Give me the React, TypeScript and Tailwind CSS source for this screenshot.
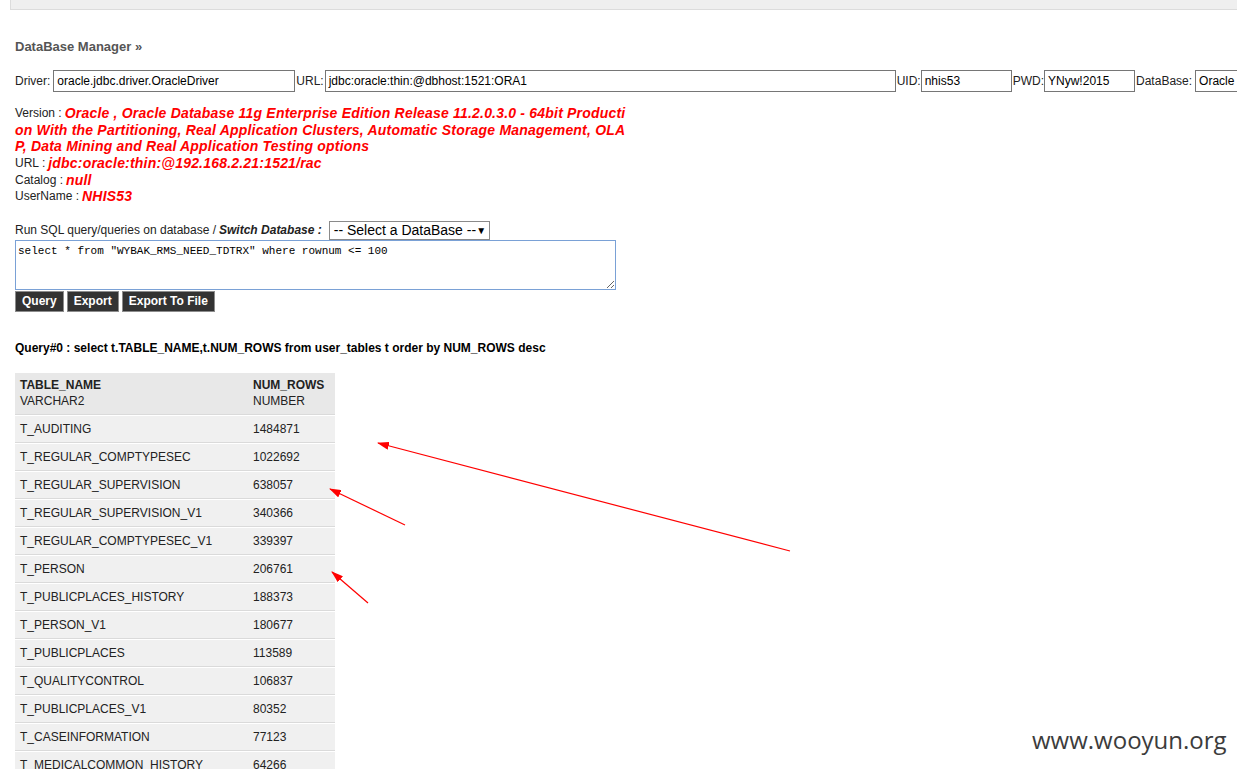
import React from "react";

const rows: [string, string][] = [
  ["T_AUDITING", "1484871"],
  ["T_REGULAR_COMPTYPESEC", "1022692"],
  ["T_REGULAR_SUPERVISION", "638057"],
  ["T_REGULAR_SUPERVISION_V1", "340366"],
  ["T_REGULAR_COMPTYPESEC_V1", "339397"],
  ["T_PERSON", "206761"],
  ["T_PUBLICPLACES_HISTORY", "188373"],
  ["T_PERSON_V1", "180677"],
  ["T_PUBLICPLACES", "113589"],
  ["T_QUALITYCONTROL", "106837"],
  ["T_PUBLICPLACES_V1", "80352"],
  ["T_CASEINFORMATION", "77123"],
  ["T_MEDICALCOMMON_HISTORY", "64266"],
  ["T_MEDICALCOMMON", "60112"],
];

function Field({ value, width }: { value: string; width: string }) {
  return (
    <div className={`${width} h-[22px] shrink-0 border border-[#767676] bg-white pl-[3px] flex items-center text-[12px] text-black whitespace-nowrap overflow-hidden`}>
      {value}
    </div>
  );
}

function Info({ label, children }: { label?: string; children: React.ReactNode }) {
  return (
    <div className="h-[16.6px] flex items-center whitespace-nowrap">
      {label && <span className="mr-[3px]">{label}</span>}
      <span className="text-[14px] leading-[16px] font-bold italic text-[#ff0000] tracking-[0.2px]">{children}</span>
    </div>
  );
}

export default function App() {
  return (
    <div
      className="relative w-[1237px] h-[769px] overflow-hidden bg-white text-[12px] text-[#222]"
      style={{ fontFamily: "'Liberation Sans', Arial, sans-serif" }}
    >
      <div className="ml-[10px] h-[10px] bg-[#efefef] border-l border-b border-[#dcdcdc]" />

      <div className="pl-[15px]">
        <h2 className="mt-[29px] text-[13px] leading-[16px] font-bold text-[#555]">DataBase Manager »</h2>

        <div className="mt-[15px] flex items-center whitespace-nowrap">
          <span>Driver:</span>
          <div className="ml-[3px]"><Field value="oracle.jdbc.driver.OracleDriver" width="w-[242px]" /></div>
          <span className="ml-[1px]">URL:</span>
          <div className="ml-[1px]"><Field value="jdbc:oracle:thin:@dbhost:1521:ORA1" width="w-[571px]" /></div>
          <span className="ml-[1px]">UID:</span>
          <div><Field value="nhis53" width="w-[91px]" /></div>
          <span className="ml-[1px]">PWD:</span>
          <div><Field value="YNyw!2015" width="w-[91px]" /></div>
          <span className="ml-[1px]">DataBase:</span>
          <div className="ml-[3px]"><Field value=" Oracle" width="w-[120px]" /></div>
        </div>

        <div className="mt-[13px] text-[12px]">
          <Info label="Version :">Oracle , Oracle Database 11g Enterprise Edition Release 11.2.0.3.0 - 64bit Producti</Info>
          <Info>on With the Partitioning, Real Application Clusters, Automatic Storage Management, OLA</Info>
          <Info>P, Data Mining and Real Application Testing options</Info>
          <Info label="URL :">jdbc:oracle:thin:@192.168.2.21:1521/rac</Info>
          <Info label="Catalog :">null</Info>
          <Info label="UserName :">NHIS53</Info>
        </div>

        <div className="mt-[16px] h-[19px] flex items-center whitespace-nowrap">
          <span>Run SQL query/queries on database /</span>
          <span className="ml-[3px] font-bold italic">Switch Database :</span>
          <div className="ml-[7px] h-[19px] w-[161px] border border-[#8a8a8a] bg-white flex items-center justify-between pl-[4px] pr-[7px] text-[14px] text-black">
            <span>-- Select a DataBase --</span>
            <span className="text-[10px]">▼</span>
          </div>
        </div>

        <textarea
          readOnly
          defaultValue={'select * from "WYBAK_RMS_NEED_TDTRX" where rownum <= 100'}
          className="block w-[601px] h-[50px] border border-[#7aa1d6] bg-white px-[2px] py-[3px] text-[11px] leading-[14px] text-black outline-none resize-y"
          style={{ fontFamily: "'Liberation Mono', 'Courier New', monospace" }}
        />

        <div className="flex gap-[3px] mt-[1px]">
          {["Query", "Export", "Export To File"].map((b) => (
            <div
              key={b}
              className="h-[21px] px-[6px] flex items-center bg-[#333] border border-[#8c8c8c] text-white font-bold text-[12px]"
            >
              {b}
            </div>
          ))}
        </div>

        <div className="mt-[28px] leading-[16px] font-bold text-black">
          Query#0 : select t.TABLE_NAME,t.NUM_ROWS from user_tables t order by NUM_ROWS desc
        </div>

        <div className="mt-[17px] w-[320px]">
          <div className="grid grid-cols-[233px_87px] bg-[#e8e8e8] pt-[4px] pb-[5px] leading-[16px] border-b border-[#dadada]">
            <div className="pl-[5px]">
              <div className="font-bold">TABLE_NAME</div>
              <div>VARCHAR2</div>
            </div>
            <div className="pl-[5px]">
              <div className="font-bold">NUM_ROWS</div>
              <div>NUMBER</div>
            </div>
          </div>
          {rows.map(([n, v]) => (
            <div
              key={n}
              className="grid grid-cols-[233px_87px] h-[28px] items-center bg-[#f0f0f0] border-t border-white border-b border-b-[#dadada]"
            >
              <div className="pl-[5px]">{n}</div>
              <div className="pl-[5px]">{v}</div>
            </div>
          ))}
        </div>
      </div>

      <svg className="absolute inset-0 pointer-events-none" width="1237" height="769">
        <defs>
          <marker id="ah" markerWidth="12" markerHeight="8" refX="11" refY="4" orient="auto" markerUnits="userSpaceOnUse">
            <path d="M0 0L12 4L0 8Z" fill="#ff0000" />
          </marker>
        </defs>
        <line x1="790" y1="551" x2="378" y2="443" stroke="#ff0000" strokeWidth="1.2" markerEnd="url(#ah)" />
        <line x1="405" y1="525" x2="330" y2="489" stroke="#ff0000" strokeWidth="1.2" markerEnd="url(#ah)" />
        <line x1="368" y1="603" x2="332" y2="572" stroke="#ff0000" strokeWidth="1.2" markerEnd="url(#ah)" />
      </svg>

      <div
        className="absolute left-[1032px] top-[725px] text-[24px] leading-[30px] text-[#3c3c3c]"
        style={{ fontFamily: "'Open Sans', sans-serif" }}
      >
        www.wooyun.org
      </div>
    </div>
  );
}
